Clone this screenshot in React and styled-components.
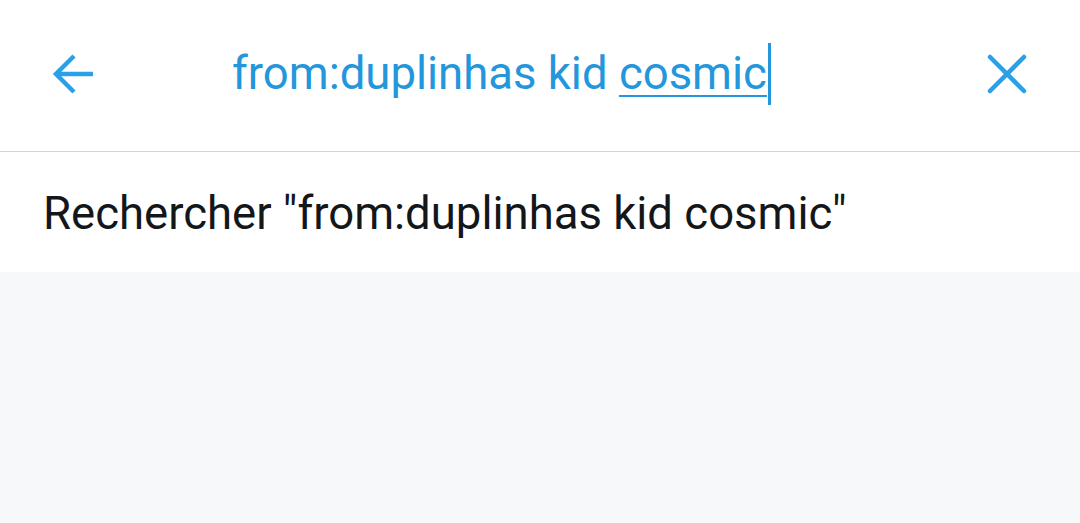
import React from "react";
import styled, { createGlobalStyle } from "styled-components";

const Global = createGlobalStyle`
  html, body { margin: 0; padding: 0; }
  body { background: #f5f8fa; font-family: Roboto, "Noto Sans", sans-serif; }
`;

const Page = styled.div`
  width: 1080px;
  height: 523px;
  display: flex;
  flex-direction: column;
  background: #f7f8fa;
`;

const Header = styled.header`
  height: 152px;
  box-sizing: border-box;
  border-bottom: 1px solid #c9d7d9;
  background: #ffffff;
  display: flex;
  align-items: center;
  padding: 0 48px 4px 48px;
`;

const IconButton = styled.button`
  width: 50px;
  height: 50px;
  padding: 0;
  border: none;
  background: none;
  display: flex;
  align-items: center;
  justify-content: center;
  color: #2aa0e6;
`;

const Query = styled.div`
  flex: 1;
  display: flex;
  align-items: center;
  padding-left: 134px;
  font-size: 45.5px;
  color: #2496dc;
  white-space: pre;
`;

const Composing = styled.span`
  text-decoration: underline;
  text-decoration-thickness: 2px;
  text-underline-offset: 6px;
`;

const Caret = styled.span`
  display: inline-block;
  width: 3px;
  height: 62px;
  background: #2496dc;
  margin-left: 1px;
`;

const ResultRow = styled.div`
  height: 120px;
  background: #ffffff;
  display: flex;
  align-items: center;
  padding-left: 43px;
  padding-top: 2px;
  box-sizing: border-box;
  font-size: 45.5px;
  color: #14171a;
`;

export default function App() {
  return (
    <Page>
      <Global />
      <Header>
        <IconButton aria-label="Retour">
          <svg width="44" height="44" viewBox="0 0 44 44" fill="none" stroke="currentColor" strokeWidth="4.5" strokeLinecap="butt">
            <path d="M42 22H5" />
            <path d="M23 4L5 22l18 18" />
          </svg>
        </IconButton>
        <Query>
          <span>from:duplinhas kid </span>
          <Composing>cosmic</Composing>
          <Caret />
        </Query>
        <IconButton aria-label="Effacer">
          <svg width="42" height="42" viewBox="0 0 42 42" fill="none" stroke="currentColor" strokeWidth="4.5" strokeLinecap="round">
            <path d="M4 4L38 38" />
            <path d="M38 4L4 38" />
          </svg>
        </IconButton>
      </Header>
      <ResultRow>Rechercher "from:duplinhas kid cosmic"</ResultRow>
    </Page>
  );
}
